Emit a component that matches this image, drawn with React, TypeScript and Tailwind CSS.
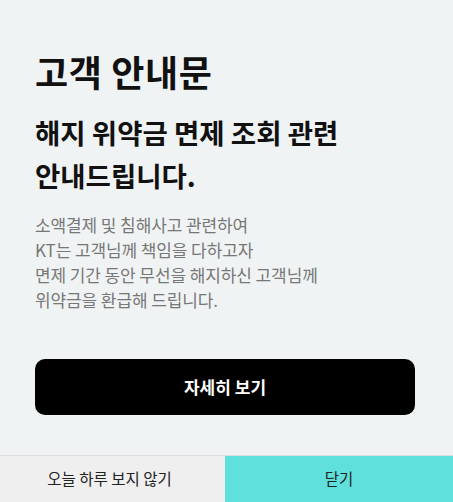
export default function App() {
  return (
    <div
      className="flex h-[502px] w-full flex-col bg-[#f0f3f4] text-[#111]"
      style={{ fontFamily: '"Noto Sans CJK KR", "Noto Sans", sans-serif' }}
    >
      <div className="pl-[35px] pr-[38px] pt-[51px]">
        <h1 className="text-[36px] leading-[40px] font-bold tracking-[0.6px]">고객 안내문</h1>
        <h2 className="mt-[20px] text-[27.5px] leading-[43px] font-bold">
          해지 위약금 면제 조회 관련
          <br />
          안내드립니다.
        </h2>
        <p className="mt-[15px] text-[17px] leading-[25px] text-[#777] tracking-[-0.1px]">
          소액결제 및 침해사고 관련하여
          <br />
          KT는 고객님께 책임을 다하고자
          <br />
          면제 기간 동안 무선을 해지하신 고객님께
          <br />
          위약금을 환급해 드립니다.
        </p>
        <button
          type="button"
          className="mt-[47px] flex h-[56px] w-full items-center justify-center rounded-[10px] bg-black text-[17px] font-bold text-white"
        >
          자세히 보기
        </button>
      </div>

      <div className="mt-auto flex h-[47px] border-t border-[#dedede]">
        <button type="button" className="w-[225px] pr-[6px] bg-[#efefef] text-[15.5px] text-[#222]">
          오늘 하루 보지 않기
        </button>
        <button type="button" className="flex-1 bg-[#5fe0dc] text-[15.5px] text-[#222]">
          닫기
        </button>
      </div>
    </div>
  );
}
